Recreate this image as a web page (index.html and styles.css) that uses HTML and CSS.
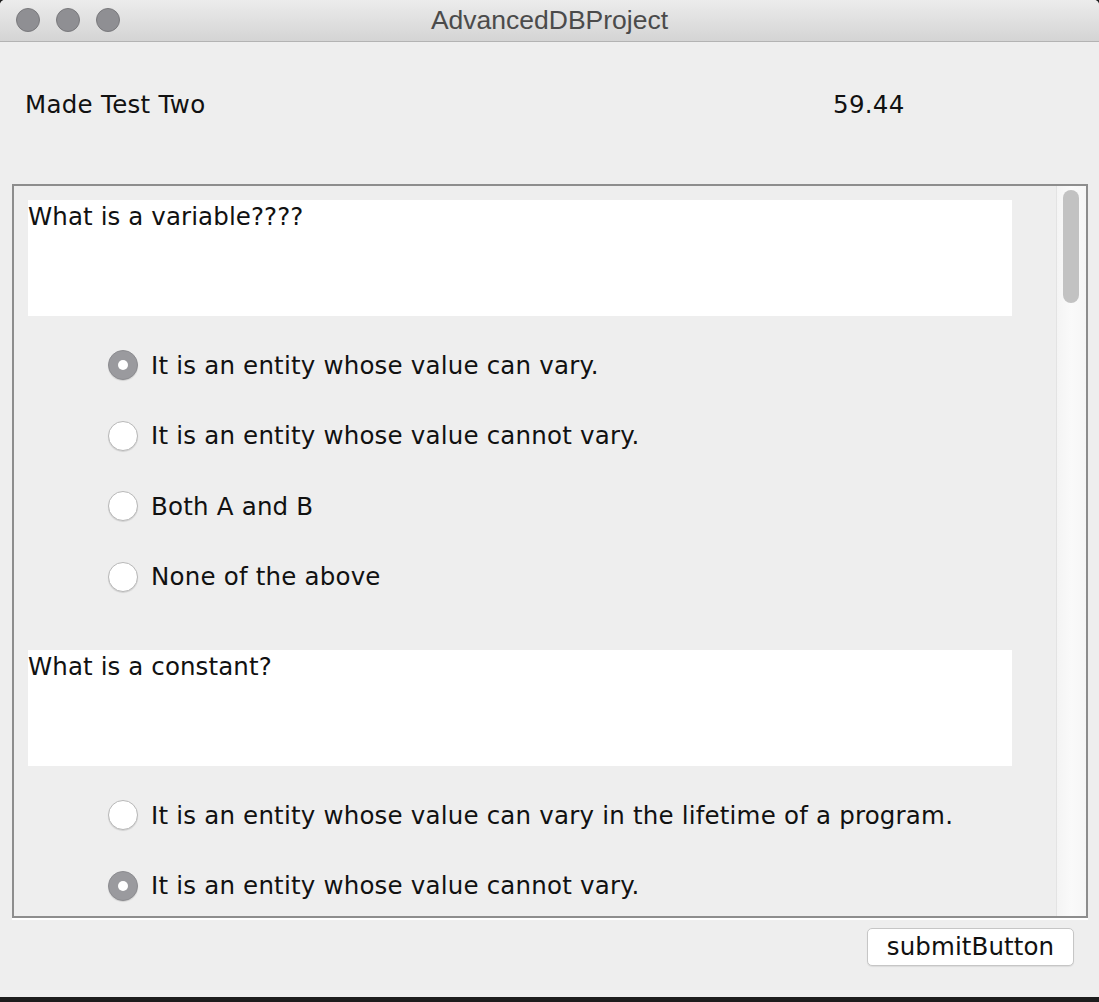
FILE: index.html
```html
<!DOCTYPE html>
<html>
<head>
<meta charset="utf-8">
<title>AdvancedDBProject</title>
<link rel="stylesheet" href="styles.css">
</head>
<body>
<div class="window">
  <div class="titlebar">
    <div class="lights">
      <span class="light"></span><span class="light"></span><span class="light"></span>
    </div>
    <div class="title">AdvancedDBProject</div>
  </div>
  <div class="header">
    <div class="test-name">Made Test Two</div>
    <div class="timer">59.44</div>
  </div>
  <div class="panel">
    <div class="viewport">
      <div class="question">
        <div class="qbox">What is a variable????</div>
        <div class="options">
          <label class="option"><span class="radio selected"></span><span class="otext">It is an entity whose value can vary.</span></label>
          <label class="option"><span class="radio"></span><span class="otext">It is an entity whose value cannot vary.</span></label>
          <label class="option"><span class="radio"></span><span class="otext">Both A and B</span></label>
          <label class="option"><span class="radio"></span><span class="otext">None of the above</span></label>
        </div>
      </div>
      <div class="question">
        <div class="qbox">What is a constant?</div>
        <div class="options">
          <label class="option"><span class="radio"></span><span class="otext">It is an entity whose value can vary in the lifetime of a program.</span></label>
          <label class="option"><span class="radio selected"></span><span class="otext">It is an entity whose value cannot vary.</span></label>
        </div>
      </div>
    </div>
    <div class="scrollbar"><div class="thumb"></div></div>
  </div>
  <div class="footer">
    <button class="submit">submitButton</button>
  </div>
</div>
<div class="desktop"></div>
</body>
</html>
```
FILE: styles.css
```css
html, body {
  margin: 0;
  padding: 0;
  background: #1d1d1d;
}
body {
  width: 1099px;
  height: 1002px;
  overflow: hidden;
  font-family: "DejaVu Sans", "Liberation Sans", sans-serif;
}
.window {
  height: 997px;
  background: #eeeeee;
  display: flex;
  flex-direction: column;
  border-radius: 5px 5px 0 0;
  overflow: hidden;
}
.titlebar {
  height: 41px;
  flex: 0 0 41px;
  border-bottom: 1px solid #b3b3b3;
  background: linear-gradient(#ececec, #d4d4d4);
  position: relative;
  display: flex;
  align-items: center;
  justify-content: center;
}
.lights {
  position: absolute;
  left: 16px;
  top: 8px;
  display: flex;
  gap: 16px;
}
.light {
  width: 22px;
  height: 22px;
  border-radius: 50%;
  background: #8f8f93;
  border: 1px solid #79797c;
}
.title {
  font-family: "Liberation Sans", Arial, sans-serif;
  font-size: 26.5px;
  color: #4b4b4b;
  line-height: 41px;
}
.header {
  height: 142px;
  flex: 0 0 142px;
  box-sizing: border-box;
  padding: 48px 0 0 25px;
  display: grid;
  grid-template-columns: 808px auto;
  align-items: start;
  font-size: 24.5px;
  letter-spacing: 0.3px;
  color: #111;
}
.panel {
  margin-left: 12px;
  width: 1076px;
  height: 734px;
  flex: 0 0 734px;
  box-sizing: border-box;
  border: 2px solid #8d8d8d;
  box-shadow: 0 2px 0 #ffffff;
  display: flex;
  background: #eeeeee;
}
.viewport {
  flex: 1 1 auto;
  overflow: hidden;
  padding: 14px 0 0 14px;
}
.question {
  margin-bottom: 38px;
}
.qbox {
  width: 984px;
  height: 116px;
  box-sizing: border-box;
  background: #ffffff;
  padding-top: 2px;
  font-size: 24.5px;
  letter-spacing: 0.1px;
  color: #111;
}
.options {
  margin-top: 14px;
  padding-left: 80px;
}
.option {
  height: 70.5px;
  display: flex;
  align-items: center;
  gap: 13px;
  font-size: 24.5px;
  letter-spacing: 0.2px;
  color: #111;
}
.radio {
  width: 30px;
  height: 30px;
  box-sizing: border-box;
  border-radius: 50%;
  background: #ffffff;
  border: 1px solid #b8b8b8;
  box-shadow: 0 1px 1px rgba(0, 0, 0, 0.12);
  flex: 0 0 30px;
  display: flex;
  align-items: center;
  justify-content: center;
}
.radio.selected {
  background: #9a9a9e;
  border-color: #8c8c90;
}
.radio.selected::after {
  content: "";
  width: 10px;
  height: 10px;
  border-radius: 50%;
  background: #ffffff;
}
.scrollbar {
  flex: 0 0 30px;
  width: 30px;
  border-left: 1px solid #e3e3e3;
  background: linear-gradient(90deg, #f4f4f4, #fafafa 50%, #f6f6f6);
  padding-top: 4px;
  box-sizing: border-box;
}
.thumb {
  margin-left: 6px;
  width: 16px;
  height: 113px;
  border-radius: 8px;
  background: #c2c2c2;
}
.footer {
  flex: 1 1 auto;
  display: flex;
  justify-content: flex-end;
  align-items: flex-start;
  padding: 10px 25px 0 0;
}
.submit {
  width: 207px;
  height: 38px;
  border: 1px solid #c6c6c6;
  border-radius: 5px;
  background: #ffffff;
  box-shadow: 0 1px 1px rgba(0, 0, 0, 0.08);
  font-family: "DejaVu Sans", "Liberation Sans", sans-serif;
  font-size: 24.5px;
  letter-spacing: 0.1px;
  color: #111;
  padding: 0;
  line-height: 36px;
}
.desktop {
  height: 5px;
  background: #1d1d1d;
}
```
